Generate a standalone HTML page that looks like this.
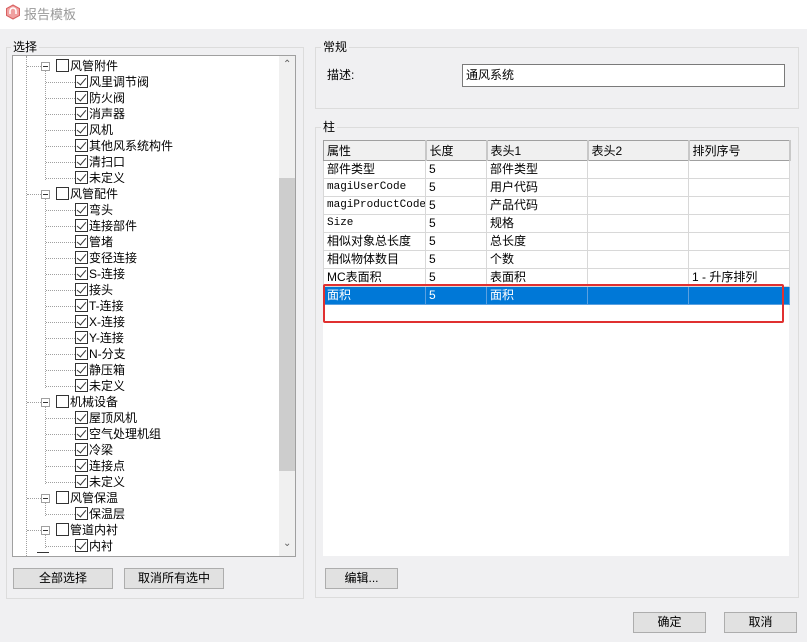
<!DOCTYPE html>
<html><head><meta charset="utf-8"><style>
*{box-sizing:border-box;margin:0;padding:0}
body{width:807px;height:642px;background:#f0f0f2;font-family:"Liberation Sans","Noto Sans CJK SC",sans-serif;font-size:12px;color:#000;position:relative;overflow:hidden}
.a{position:absolute}
.title{left:0;top:0;width:807px;height:29px;background:#fff}
.gb{border:1px solid #dcdcdc}
.gl{background:#f0f0f2;padding:0 2px;font-size:12px;line-height:14px}
.btn{background:#e1e1e1;border:1px solid #adadad;text-align:center;line-height:19px;font-size:12px}
.row{position:absolute;height:16px;line-height:16px;white-space:nowrap}
.cb{display:inline-block;width:13px;height:13px;border:1px solid #333;background:#fff;vertical-align:-2px;margin-right:1px;position:relative}
.cb.c::after{content:"";position:absolute;left:3px;top:0px;width:4px;height:8px;border:solid #333;border-width:0 1.5px 1.5px 0;transform:rotate(40deg)}
.ex{position:absolute;width:9px;height:9px;border:1px solid #a0a0a0;background:#fff}
.ex::after{content:"";position:absolute;left:1px;top:3px;width:5px;height:1px;background:#333}
table{border-collapse:collapse;font-size:12px;table-layout:fixed}
td{border:1px solid #d8d8d8;height:18px;padding:0 3px;white-space:nowrap;line-height:17px;overflow:hidden}
th{background:#f0f0f0;border:1px solid #a0a0a0;font-weight:normal;text-align:left;padding:0 3px;height:20px;border-right:2px solid #c8c8c8}
.mono{font-family:"Liberation Mono","Noto Sans CJK SC",monospace;font-size:11px}
.sel td{background:#0078d7;color:#fff;border-color:#5aa0e0}
</style></head><body>
<div class="a title"></div>
<svg class="a" style="left:5px;top:4px" width="16" height="16" viewBox="0 0 16 16"><path d="M8 1 L14.5 4.5 V11.5 L8 15 L1.5 11.5 V4.5Z" fill="#f0a0a0" stroke="#d86060"/><path d="M5 10 V7 A3 3 0 0 1 11 7 V10" fill="none" stroke="#fff" stroke-width="1.5"/></svg>
<div class="a" style="left:24px;top:4px;color:#999;font-size:13px">报告模板</div>

<div class="a gb" style="left:6px;top:47px;width:298px;height:552px"></div>
<div class="a gl" style="left:11px;top:40px">选择</div>
<div class="a" style="left:12px;top:55px;width:284px;height:502px;background:#fff;border:1px solid #a0a0a0;overflow:hidden">
  <div class="a" style="left:13px;top:0;height:500px;border-left:1px dotted #a0a0a0"></div>
  <div class="a" style="left:32px;top:14px;height:110px;border-left:1px dotted #a0a0a0"></div>
  <div class="a" style="left:32px;top:142px;height:190px;border-left:1px dotted #a0a0a0"></div>
  <div class="a" style="left:32px;top:350px;height:78px;border-left:1px dotted #a0a0a0"></div>
  <div class="a" style="left:32px;top:446px;height:14px;border-left:1px dotted #a0a0a0"></div>
  <div class="a" style="left:32px;top:478px;height:14px;border-left:1px dotted #a0a0a0"></div>
  <div id="tree"></div>
  <div class="a" style="left:266px;top:0;width:17px;height:500px;background:#f0f0f0"></div>
  <div class="a" style="left:266px;top:122px;width:17px;height:293px;background:#cdcdcd"></div>
  <div class="a" style="left:270px;top:3px;color:#606060;font-size:10px">&#8963;</div>
  <div class="a" style="left:270px;top:482px;color:#606060;font-size:10px">&#8964;</div>
  <div class="a" style="left:24px;top:496px;width:12px;height:1px;background:#333"></div>
</div>
<div class="a btn" style="left:13px;top:568px;width:100px;height:21px">全部选择</div>
<div class="a btn" style="left:124px;top:568px;width:100px;height:21px">取消所有选中</div>

<div class="a gb" style="left:315px;top:47px;width:484px;height:62px"></div>
<div class="a gl" style="left:321px;top:40px">常规</div>
<div class="a" style="left:327px;top:66px">描述:</div>
<div class="a" style="left:462px;top:64px;width:323px;height:23px;background:#fff;border:1px solid #7a7a7a;padding:2px 3px;line-height:17px">通风系统</div>

<div class="a gb" style="left:315px;top:127px;width:484px;height:471px"></div>
<div class="a gl" style="left:321px;top:120px">柱</div>
<div class="a" style="left:323px;top:140px;width:466px;height:416px;background:#fff">
<table style="width:466px">
<colgroup><col style="width:102px"><col style="width:61px"><col style="width:101px"><col style="width:101px"><col style="width:101px"></colgroup>
<tr><th>属性</th><th>长度</th><th>表头1</th><th>表头2</th><th>排列序号</th></tr>
<tr><td>部件类型</td><td>5</td><td>部件类型</td><td></td><td></td></tr>
<tr><td class="mono">magiUserCode</td><td>5</td><td>用户代码</td><td></td><td></td></tr>
<tr><td class="mono">magiProductCode</td><td>5</td><td>产品代码</td><td></td><td></td></tr>
<tr><td class="mono">Size</td><td>5</td><td>规格</td><td></td><td></td></tr>
<tr><td>相似对象总长度</td><td>5</td><td>总长度</td><td></td><td></td></tr>
<tr><td>相似物体数目</td><td>5</td><td>个数</td><td></td><td></td></tr>
<tr><td>MC表面积</td><td>5</td><td>表面积</td><td></td><td>1 - 升序排列</td></tr>
<tr class="sel"><td>面积</td><td>5</td><td>面积</td><td></td><td></td></tr>
</table>
</div>
<div class="a" style="left:323px;top:284px;width:461px;height:39px;border:2px solid #e03030;border-radius:2px"></div>
<div class="a btn" style="left:325px;top:568px;width:73px;height:21px">编辑...</div>
<div class="a btn" style="left:633px;top:612px;width:73px;height:21px">确定</div>
<div class="a btn" style="left:724px;top:612px;width:73px;height:21px">取消</div>
<script>
var items=[[1,"风管附件"],[2,"风里调节阀"],[2,"防火阀"],[2,"消声器"],[2,"风机"],[2,"其他风系统构件"],[2,"清扫口"],[2,"未定义"],[1,"风管配件"],[2,"弯头"],[2,"连接部件"],[2,"管堵"],[2,"变径连接"],[2,"S-连接"],[2,"接头"],[2,"T-连接"],[2,"X-连接"],[2,"Y-连接"],[2,"N-分支"],[2,"静压箱"],[2,"未定义"],[1,"机械设备"],[2,"屋顶风机"],[2,"空气处理机组"],[2,"冷梁"],[2,"连接点"],[2,"未定义"],[1,"风管保温"],[2,"保温层"],[1,"管道内衬"],[2,"内衬"]];
var h="";items.forEach(function(it,i){var y=2+i*16;
if(it[0]==1){h+='<div class="ex" style="left:28px;top:'+(y+4)+'px"></div><div class="a" style="left:14px;top:'+(y+8)+'px;width:14px;border-top:1px dotted #a0a0a0"></div><div class="row" style="left:43px;top:'+y+'px"><span class="cb"></span>'+it[1]+'</div>';}
else{h+='<div class="a" style="left:33px;top:'+(y+8)+'px;width:29px;border-top:1px dotted #a0a0a0"></div><div class="row" style="left:62px;top:'+y+'px"><span class="cb c"></span>'+it[1]+'</div>';}});
document.getElementById("tree").innerHTML=h;
</script>
</body></html>
